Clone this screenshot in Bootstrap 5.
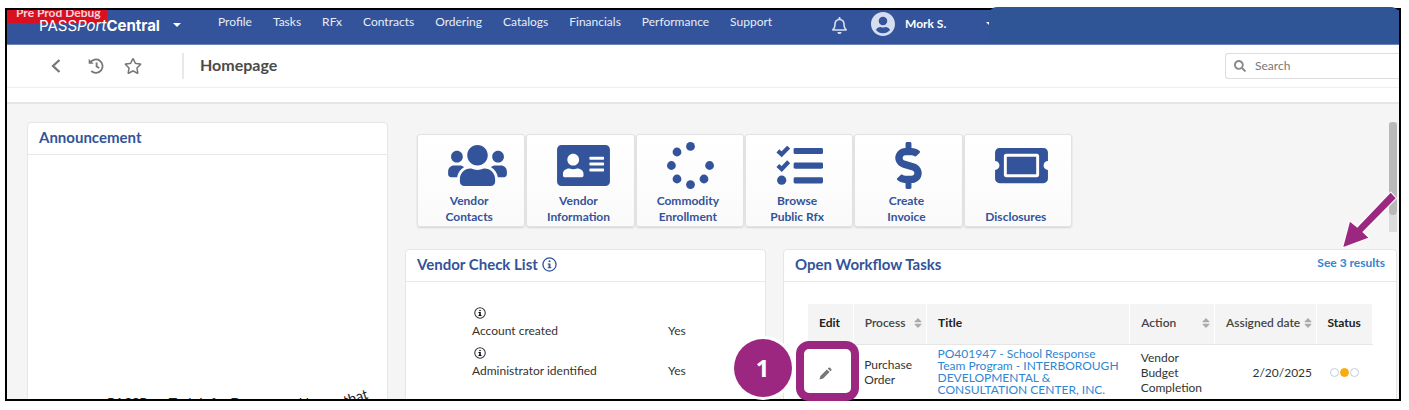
<!DOCTYPE html>
<html lang="en">
<head>
<meta charset="utf-8">
<meta name="viewport" content="width=device-width, initial-scale=1">
<title>PASSPort Central - Homepage</title>
<link href="https://cdn.jsdelivr.net/npm/bootstrap@5.3.0/dist/css/bootstrap.min.css" rel="stylesheet">
<style>
  body { font-family: Lato, sans-serif; font-size: 12px; line-height: 15px; color: #333; background: #fff; padding: 8px 8px 9px 5px; height: 100vh; }
  a { text-decoration: none; }
  .frame { position: relative; height: 100%; border: 2px solid #000; }
  .screen { height: 100%; overflow: hidden; background: #f5f5f5; }
  .topbar { position: relative; height: 35px; background: #33539a; border-bottom: 1px solid #6c86bd; padding-left: 32px; }
  .debug-tag { position: absolute; left: 0; top: 0; height: 13px; width: 100px; background: #d9101f; color: #f3d5dc; font-weight: 700; line-height: 6px; padding-left: 9px; overflow: hidden; white-space: nowrap; }
  .brand { position: relative; font-family: Inter, sans-serif; font-size: 15px; color: #fff; width: 179px; height: 30px; }
  .brand b { font-weight: 700; }
  .caret { width: 0; border: 4px solid transparent; border-top-color: #fff; border-bottom: 0; }
  .main-nav { gap: 21px; height: 23px; }
  .main-nav a { color: #e8edf6; }
  .user-area { position: absolute; left: 825px; top: 0; height: 27px; gap: 24px; color: #fff; }
  .redaction { position: absolute; top: -3px; right: 0; width: 410px; height: 37px; background: #2f5597; border-radius: 8px 8px 0 0; }
  .toolbar { height: 43px; background: #fff; border-bottom: 1px solid #eee; padding-left: 43px; }
  .toolbar button, .tool-cell button { border: 0; background: none; padding: 0; line-height: 0; color: #777; }
  .page-title { font-size: 16px; line-height: 24px; padding-bottom: 2px; font-weight: 700; color: #4a4a4a; border-left: 2px solid #e8e8e8; padding-left: 16px; margin: 0 0 0 40px; }
  .search-box { width: 174px; height: 26px; border: 1px solid #ddd; border-right: 0; border-radius: 3px 0 0 3px; padding-left: 8px; gap: 9px; color: #8a8a8a; }
  .search-box input { border: 0; outline: 0; width: 100%; min-width: 0; padding: 0 0 2px; background: none; font-size: 12px; }
  .search-box input::placeholder { color: #777; opacity: 1; }
  .strip { height: 16px; background: #fff; border-bottom: 2px solid #e6e6e6; }
  .board { display: grid; grid-template-columns: 361fr 361fr 614fr; grid-template-rows: 110px auto; column-gap: 17px; row-gap: 17px; padding: 18px 2px 0 20px; }
  .panel { background: #fff; border: 1px solid #e6e6e6; border-radius: 4px 4px 0 0; height: 300px; }
  .panel-head { height: 32px; border-bottom: 1px solid #e8e8e8; padding: 0 11px 3px; }
  .panel-head h2 { font-size: 15px; line-height: 20px; font-weight: 700; color: #33539a; margin: 0; }
  .span-rows { grid-row: 1 / span 2; height: 400px; }
  .ticker { color: #222; font-size: 14px; line-height: 16px; padding: 240px 18px 0 79px; gap: 3px; white-space: nowrap; }
  .ticker i { font-style: normal; margin-top: -6px; transform: rotate(-18deg); }
  .tiles { grid-column: 2 / span 2; padding: 0 0 0 12px; }
  .tile-list { gap: 1px; width: 655px; margin-top: 12px; }
  .tile { flex: 1 1 0; height: 93px; background: linear-gradient(#fff, #fafafa); border: 1px solid #e2e2e2; border-radius: 3px; box-shadow: 0 1px 2px #0002; color: #33539a; padding: 7px 4px 0 0; font-weight: 700; line-height: 16px; }
  .tile-icon { width: 47px; height: 47px; margin: 0 0 4px 5px; }
  .tile-icon svg { height: 47px; flex: none; display: block; }
  .tile-icon.wide { justify-content: start; }
  .tile span { height: 32px; }
  .scroll-track { width: 8px; height: 110px; background: #dcdcdc; }
  .scroll-thumb { height: 93px; background: #b9b9b9; border-radius: 4px; }
  .checks { width: 100%; table-layout: fixed; margin-top: 16px; color: #333; }
  .checks td, .checks th { height: 40px; padding: 0; vertical-align: bottom; font-weight: 400; }
  .checks th { padding-left: 66px; }
  .checks svg { display: block; margin: 0 0 4px 2px; }
  .tasks { width: calc(100% - 47px); margin: 22px 23px 0 24px; table-layout: fixed; color: #333; }
  .tasks th { height: 40px; background: #f4f4f4; border-right: 1px solid #fff; border-bottom: 1px solid #e6e6e6; padding: 0 4px 2px 11px; font-weight: 600; color: #444; white-space: nowrap; }
  .tasks th.strong { font-weight: 700; color: #222; }
  .tasks td { height: 56px; padding: 0 10px 0 11px; vertical-align: middle; }
  .tasks td a { display: block; line-height: 12px; color: #2f86d2; white-space: nowrap; }
  .results { color: #2f86d2; font-weight: 700; padding-bottom: 4px; }
  .dots { gap: 1px; padding-left: 3px; }
  .dot { width: 9px; height: 9px; border: 1px solid #c5cbe0; border-radius: 50%; }
  .dot.on { background: #f9ad0c; border-color: #f9ad0c; }
  .marker { position: absolute; border-radius: 50%; width: 58px; height: 58px; left: 52.2%; bottom: 2px; background: #9c2781; color: #fff; font: 700 24px/58px "Open Sans", sans-serif; text-align: center; box-shadow: 0 0 0 3px #fff; }
  .spotlight { position: absolute; left: 56.7%; bottom: -2px; width: 63px; height: 60px; border: 8px solid #9c2781; border-radius: 13px; }
  .pointer { position: absolute; right: 2px; top: 180px; }
</style>
</head>
<body>
<svg width="0" height="0" class="position-absolute">
  <symbol id="info" viewBox="0 0 16 16"><circle cx="8" cy="8" r="7" fill="none" stroke="currentColor" stroke-width="1.4"/><circle cx="8" cy="4.6" r="1.1"/><path d="M6 6.8h3v4h1v1.2H6v-1.2h1V8H6z"/></symbol>
  <symbol id="sort" viewBox="0 0 8 10"><path d="M4 0l3.4 3.4q.4.8-.4.8H1q-.8 0-.4-.8zM4 10L.6 6.6q-.4-.8.4-.8h6q.8 0 .4.8z"/></symbol>
</svg>
<div class="frame">
  <div class="screen">
    <header class="topbar d-flex">
      <div class="debug-tag">Pre Prod Debug</div>
      <a href="#" class="brand d-flex align-items-center"><span>PASS<em>Port</em><b>Central</b></span><span class="caret" style="margin-left:13px"></span></a>
      <nav class="main-nav d-flex align-items-center">
        <a href="#">Profile</a><a href="#">Tasks</a><a href="#">RFx</a><a href="#">Contracts</a><a href="#">Ordering</a><a href="#">Catalogs</a><a href="#">Financials</a><a href="#">Performance</a><a href="#">Support</a>
      </nav>
      <div class="user-area d-flex align-items-center">
        <svg class="mt-1" width="15" height="17" viewBox="0 0 448 512" fill="#d5deef"><path d="M439.39 362.29c-19.32-20.76-55.47-51.99-55.47-154.29 0-77.7-54.48-139.9-127.94-155.16V32c0-17.67-14.32-32-31.98-32s-31.98 14.33-31.98 32v20.84C118.56 68.1 64.08 130.3 64.08 208c0 102.3-36.15 133.53-55.47 154.29-6 6.45-8.66 14.16-8.61 21.71.11 16.4 12.98 32 32.1 32h383.8c19.12 0 32-15.6 32.1-32 .05-7.55-2.61-15.27-8.61-21.71zM67.53 368c21.22-27.97 44.42-74.33 44.53-159.42 0-.2-.06-.38-.06-.58 0-61.86 50.14-112 112-112s112 50.14 112 112c0 .2-.06.38-.06.58.11 85.1 23.31 131.46 44.53 159.42H67.53zM224 512c35.32 0 63.97-28.65 63.97-64H160.03c0 35.35 28.65 64 63.97 64z"/></svg>
        <a href="#" class="d-flex align-items-center text-white fw-bold" style="gap:10px">
          <svg width="24" height="24" viewBox="0 8 496 496" fill="#d5deef"><path d="M248 8C111 8 0 119 0 256s111 248 248 248 248-111 248-248S385 8 248 8zm0 96c48.600 0 88 39.400 88 88s-39.400 88-88 88-88-39.400-88-88 39.400-88 88-88zm0 344c-58.700 0-111.300-26.600-146.500-68.200 18.800-35.400 55.600-59.800 98.500-59.800 2.400 0 4.800.4 7.100 1.100 13 4.200 26.600 6.900 40.900 6.900 14.300 0 28-2.700 40.900-6.900 2.300-.7 4.700-1.100 7.100-1.100 42.900 0 79.700 24.400 98.500 59.800C359.300 421.400 306.700 448 248 448z"/></svg>
          Mork S.</a>
        <span class="caret ms-3"></span>
      </div>
    </header>
    <div class="toolbar d-flex align-items-center">
      <button type="button" aria-label="Back"><svg width="12" height="14" viewBox="0 0 12 14" fill="none" stroke="currentColor" stroke-width="2.300"><path d="M9.500 1L3 7l6.500 6"/></svg></button>
      <button type="button" aria-label="History" style="margin-left:26px"><svg width="16" height="16" viewBox="0 0 16 16" fill="none" stroke="currentColor" stroke-width="1.800"><path d="M2.200 4.600A6.700 6.700 0 1 1 3.300 13M8.600 4.500v4l2.600 1.600"/><path d="M.7.8v5h5z" fill="currentColor" stroke="none"/></svg></button>
      <button type="button" aria-label="Favourite" style="margin-left:20px"><svg width="18" height="16" viewBox="0 0 576 512" fill="currentColor"><path d="M528.100 171.500L382 150.200 316.700 17.800c-11.700-23.600-45.600-23.900-57.400 0L194 150.200 47.900 171.500c-26.200 3.800-36.700 36.100-17.700 54.600l105.700 103-25 145.500c-4.500 26.300 23.200 46 46.400 33.700L288 439.600l130.700 68.700c23.200 12.200 50.900-7.400 46.400-33.700l-25-145.500 105.700-103c19-18.500 8.500-50.800-17.700-54.600zM388.600 312.300l23.700 138.400L288 385.400l-124.300 65.300 23.700-138.400-100.600-98 139-20.200 62.200-126 62.200 126 139 20.200-100.600 98z"/></svg></button>
      <h1 class="page-title">Homepage</h1>
      <label class="search-box d-flex align-items-center ms-auto">
        <svg class="flex-shrink-0" width="12" height="12" viewBox="0 0 512 512" fill="currentColor"><path d="M505 442.700L405.300 343c-4.500-4.500-10.600-7-17-7H372c27.600-35.300 44-79.700 44-128C416 93.100 322.900 0 208 0S0 93.100 0 208s93.100 208 208 208c48.300 0 92.700-16.400 128-44v16.300c0 6.400 2.500 12.500 7 17l99.700 99.700c9.400 9.400 24.600 9.400 33.900 0l28.300-28.300c9.400-9.400 9.400-24.600.1-34zM208 336c-70.700 0-128-57.200-128-128 0-70.700 57.200-128 128-128 70.700 0 128 57.200 128 128 0 70.700-57.200 128-128 128z"/></svg>
        <input type="search" placeholder="Search" aria-label="Search">
      </label>
    </div>
    <div class="strip"></div>

    <main class="board">
      <section class="panel span-rows">
        <div class="panel-head d-flex align-items-center"><h2>Announcement</h2></div>
        <div class="ticker d-flex"><span>PASSPort Task Info: Document Names</span><i>that</i></div>
      </section>

      <div class="tiles d-flex justify-content-between">
        <div class="tile-list d-flex">
          <a href="#" class="tile d-flex flex-column align-items-center text-center">
            <div class="tile-icon wide d-flex"><svg viewBox="0 0 640 512" width="59" fill="currentColor"><path d="M96 224c35.300 0 64-28.700 64-64s-28.700-64-64-64-64 28.700-64 64 28.700 64 64 64zm448 0c35.300 0 64-28.700 64-64s-28.700-64-64-64-64 28.700-64 64 28.700 64 64 64zm32 32h-64c-17.600 0-33.500 7.100-45.100 18.600 40.300 22.100 68.900 62 75.100 109.400h66c17.700 0 32-14.300 32-32v-32c0-35.300-28.700-64-64-64zm-256 0c61.900 0 112-50.100 112-112S381.900 32 320 32 208 82.100 208 144s50.100 112 112 112zm76.800 32h-8.300c-20.800 10-43.900 16-68.500 16s-47.600-6-68.500-16h-8.300C179.600 288 128 339.600 128 403.200V432c0 26.500 21.500 48 48 48h288c26.500 0 48-21.500 48-48v-28.800c0-63.600-51.600-115.200-115.200-115.200zm-223.700-13.400C161.500 263.100 145.600 256 128 256H64c-35.300 0-64 28.700-64 64v32c0 17.700 14.300 32 32 32h65.900c6.300-47.400 34.900-87.300 75.200-109.400z"/></svg></div>
            <span>Vendor<br>Contacts</span></a>
          <a href="#" class="tile d-flex flex-column align-items-center text-center">
            <div class="tile-icon wide d-flex"><svg viewBox="0 0 576 512" width="53" fill="currentColor"><path d="M528 32H48C21.500 32 0 53.500 0 80v352c0 26.500 21.500 48 48 48h480c26.500 0 48-21.500 48-48V80c0-26.500-21.500-48-48-48zm-352 96c35.300 0 64 28.700 64 64s-28.700 64-64 64-64-28.700-64-64 28.700-64 64-64zm112 236.800c0 10.600-10 19.200-22.400 19.200H86.400C74 384 64 375.400 64 364.800v-19.200c0-31.800 30.100-57.600 67.200-57.600h5c12.300 5.100 25.700 8 39.800 8s27.600-2.900 39.800-8h5c37.100 0 67.200 25.800 67.200 57.600v19.200zM512 312c0 4.400-3.600 8-8 8H360c-4.400 0-8-3.600-8-8v-16c0-4.400 3.600-8 8-8h144c4.400 0 8 3.600 8 8v16zm0-64c0 4.400-3.600 8-8 8H360c-4.400 0-8-3.600-8-8v-16c0-4.400 3.600-8 8-8h144c4.400 0 8 3.600 8 8v16zm0-64c0 4.400-3.600 8-8 8H360c-4.400 0-8-3.600-8-8v-16c0-4.400 3.600-8 8-8h144c4.400 0 8 3.600 8 8v16z"/></svg></div>
            <span>Vendor<br>Information</span></a>
          <a href="#" class="tile d-flex flex-column align-items-center text-center">
            <div class="tile-icon wide d-flex"><svg viewBox="0 0 512 512" width="47" fill="currentColor"><circle cx="256" cy="48" r="48"/><circle cx="256" cy="464" r="48"/><circle cx="464" cy="256" r="48"/><circle cx="48" cy="256" r="48"/><circle cx="109" cy="109" r="48"/><circle cx="403" cy="403" r="48"/><circle cx="109" cy="403" r="48"/></svg></div>
            <span>Commodity<br>Enrollment</span></a>
          <a href="#" class="tile d-flex flex-column align-items-center text-center">
            <div class="tile-icon wide d-flex"><svg viewBox="0 0 512 512" width="47" fill="currentColor"><rect x="192" y="64" width="320" height="68" rx="16"/><rect x="192" y="224" width="320" height="68" rx="16"/><rect x="192" y="384" width="320" height="68" rx="16"/><circle cx="62" cy="416" r="50"/><path d="M20 96l42 38 76-78M20 256l42 38 76-78" fill="none" stroke="currentColor" stroke-width="46" stroke-linejoin="miter" stroke-linecap="butt"/></svg></div>
            <span>Browse<br>Public Rfx</span></a>
          <a href="#" class="tile d-flex flex-column align-items-center text-center">
            <div class="tile-icon d-flex justify-content-center"><svg viewBox="0 0 288 512" width="27" fill="currentColor"><path d="M209.200 233.400l-108-31.600C88.700 198.200 80 186.500 80 173.500c0-16.300 13.200-29.500 29.500-29.500h66.300c12.200 0 24.200 3.700 34.200 10.500 6.100 4.100 14.300 3.100 19.500-2l34.800-34c7.100-6.900 6.100-18.400-1.800-24.500C238 74.800 207.400 64.100 176 64V16c0-8.800-7.200-16-16-16h-32c-8.800 0-16 7.200-16 16v48h-2.500C45.800 64-5.400 118.700.5 183.600c4.200 46.100 39.400 83.600 83.800 96.600l102.500 30c12.500 3.700 21.200 15.300 21.200 28.300 0 16.300-13.200 29.500-29.500 29.500h-66.300C100 368 88 364.300 78 357.500c-6.100-4.100-14.300-3.100-19.500 2l-34.800 34c-7.100 6.900-6.100 18.400 1.800 24.500 24.500 19.200 55.100 29.900 86.500 30v48c0 8.800 7.200 16 16 16h32c8.800 0 16-7.200 16-16v-48.200c46.600-.9 90.300-28.600 105.700-72.700 21.500-61.600-14.600-124.800-72.500-141.700z"/></svg></div>
            <span>Create<br>Invoice</span></a>
          <a href="#" class="tile d-flex flex-column align-items-center text-center">
            <div class="tile-icon wide d-flex"><svg viewBox="0 0 576 512" width="53" fill="currentColor"><path d="M128 160h320v192H128V160zm400 96c0 26.500 21.500 48 48 48v96c0 26.500-21.500 48-48 48H48c-26.500 0-48-21.500-48-48v-96c26.500 0 48-21.500 48-48s-21.500-48-48-48v-96c0-26.500 21.500-48 48-48h480c26.500 0 48 21.500 48 48v96c-26.500 0-48 21.500-48 48zm-48-104c0-13.300-10.700-24-24-24H120c-13.300 0-24 10.700-24 24v208c0 13.300 10.700 24 24 24h336c13.300 0 24-10.700 24-24V152z"/></svg></div>
            <span class="d-flex align-items-end">Disclosures</span></a>
        </div>
        <div class="scroll-track"><div class="scroll-thumb"></div></div>
      </div>

      <section class="panel">
        <div class="panel-head d-flex align-items-center gap-1"><h2>Vendor Check List</h2><svg width="15" height="15" fill="#33539a" color="#33539a"><use href="#info"/></svg></div>
        <table class="checks">
          <colgroup><col style="width:73%"><col></colgroup>
          <tbody>
            <tr><th scope="row"><svg width="12" height="12"><use href="#info"/></svg>Account created</th><td>Yes</td></tr>
            <tr><th scope="row"><svg width="12" height="12"><use href="#info"/></svg>Administrator identified</th><td>Yes</td></tr>
            <tr><th scope="row"><svg width="12" height="12"><use href="#info"/></svg></th><td></td></tr>
          </tbody>
        </table>
      </section>

      <section class="panel">
        <div class="panel-head d-flex align-items-center justify-content-between"><h2>Open Workflow Tasks</h2><a href="#" class="results">See 3 results</a></div>
        <table class="tasks">
          <colgroup><col style="width:8%"><col style="width:13%"><col style="width:36%"><col style="width:15%"><col style="width:18%"><col style="width:10%"></colgroup>
          <thead><tr>
            <th class="strong">Edit</th>
            <th><div class="d-flex align-items-center justify-content-between">Process<svg width="8" height="10" fill="#aaa"><use href="#sort"/></svg></div></th>
            <th class="strong">Title</th>
            <th><div class="d-flex align-items-center justify-content-between">Action<svg width="8" height="10" fill="#aaa"><use href="#sort"/></svg></div></th>
            <th><div class="d-flex align-items-center justify-content-between">Assigned date<svg width="8" height="10" fill="#aaa"><use href="#sort"/></svg></div></th>
            <th class="strong">Status</th>
          </tr></thead>
          <tbody><tr>
            <td class="tool-cell"><button type="button" aria-label="Edit task"><svg width="13" height="13" viewBox="0 0 13 13" fill="#777"><path d="M.5 12.500l.9-3.600 6.500-6.500 2.700 2.700-6.500 6.500zM8.700 1.600l.9-.9q.8-.6 1.500 0l1.200 1.200q.6.800 0 1.500l-.9.900z"/></svg></button></td>
            <td>Purchase Order</td>
            <td><a href="#">PO401947 - School Response<br>Team Program - INTERBOROUGH<br>DEVELOPMENTAL &amp;<br>CONSULTATION CENTER, INC.</a></td>
            <td>Vendor Budget Completion</td>
            <td class="text-end px-1">2/20/2025</td>
            <td><div class="dots d-flex"><span class="dot"></span><span class="dot on"></span><span class="dot"></span></div></td>
          </tr></tbody>
        </table>
      </section>
    </main>
  </div>
  <div class="redaction"></div>
  <div class="spotlight"></div>
  <div class="marker">1</div>
  <svg class="pointer" width="56" height="62" viewBox="1341 189 56 62"><path d="M1343.300 246l6.700-25.300 7.300 6 33.400-35 5 5.600-33.400 33.700 6 5.700z" fill="#9c2781" stroke="#fff" stroke-width="2" paint-order="stroke"/></svg>
</div>
<script src="https://cdn.jsdelivr.net/npm/bootstrap@5.3.0/dist/js/bootstrap.bundle.min.js"></script>
</body>
</html>
